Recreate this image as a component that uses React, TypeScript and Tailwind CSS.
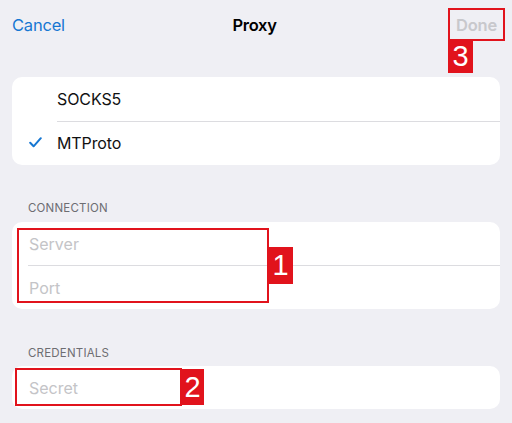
import React from "react";

const Marker = ({ n, className }: { n: string; className: string }) => (
  <div
    className={`absolute bg-[#e1131c] text-white flex items-center justify-center text-[29px] leading-none font-['Liberation_Sans',Arial,sans-serif] ${className}`}
  >
    {n}
  </div>
);

const Divider = ({ inset }: { inset: string }) => (
  <div className={`h-px bg-[#dcdce0] ${inset}`} />
);

export default function App() {
  return (
    <div className="relative w-[512px] h-[423px] overflow-hidden bg-[#efeff4] font-['Inter','Noto_Sans',sans-serif]">
      {/* nav bar */}
      <div className="h-[50px] grid grid-cols-[1fr_auto_1fr] items-center pl-3 pr-[15px]">
        <span className="text-[16.5px] text-[#1677d2] tracking-[-0.2px]">Cancel</span>
        <span className="text-[16.5px] font-semibold text-black tracking-[-0.3px]">Proxy</span>
        <span className="text-[16.5px] font-semibold text-[#c8c8cc] tracking-[-0.2px] justify-self-end">Done</span>
      </div>

      {/* type card */}
      <div className="mt-[27px] mx-3 bg-white rounded-[10px] overflow-hidden">
        <div className="h-[44px] flex items-center pl-[45px] text-[16px] text-[#111] tracking-[-0.1px]">SOCKS5</div>
        <Divider inset="ml-[45px]" />
        <div className="h-[43px] flex items-center text-[16px] text-[#111] tracking-[-0.1px]">
          <div className="w-[45px] flex justify-center pl-[1px] pb-[2px]">
            <svg width="13" height="11" viewBox="0 0 13 11" fill="none">
              <path d="M1.2 5.8 L4.6 9.3 L11.8 1.2" stroke="#1677d2" strokeWidth="2" strokeLinecap="round" strokeLinejoin="round" />
            </svg>
          </div>
          <span className="-mt-[2px]">MTProto</span>
        </div>
      </div>

      {/* connection */}
      <div className="mt-[36px] h-4 flex items-center pl-7 text-[11.5px] text-[#6d6d72] tracking-[0.2px]">CONNECTION</div>
      <div className="mt-[5px] mx-3 bg-white rounded-[10px] overflow-hidden">
        <div className="h-[43px] flex items-center pl-[17px] text-[16px] text-[#c4c4c7]">Server</div>
        <Divider inset="ml-4" />
        <div className="h-[43px] flex items-center pl-[17px] text-[16px] text-[#c4c4c7]">Port</div>
      </div>

      {/* credentials */}
      <div className="mt-[37px] h-4 flex items-center pl-7 text-[11.5px] text-[#6d6d72] tracking-[0.2px]">CREDENTIALS</div>
      <div className="mt-[4px] mx-3 bg-white rounded-[10px] overflow-hidden">
        <div className="h-[43px] flex items-center pl-[17px] text-[16px] text-[#c4c4c7]">Secret</div>
      </div>

      {/* annotations */}
      <div className="absolute left-[448px] top-[8px] w-[57px] h-[33px] border-2 border-[#e1131c]" />
      <Marker n="3" className="left-[448px] top-[40px] w-[25px] h-[33px]" />

      <div className="absolute left-[17px] top-[228px] w-[252px] h-[75px] border-2 border-[#e1131c]" />
      <Marker n="1" className="left-[268px] top-[247px] w-[25px] h-[37px]" />

      <div className="absolute left-[15px] top-[368px] w-[167px] h-[38px] border-2 border-[#e1131c]" />
      <Marker n="2" className="left-[181px] top-[369px] w-[23px] h-[36px]" />
    </div>
  );
}
